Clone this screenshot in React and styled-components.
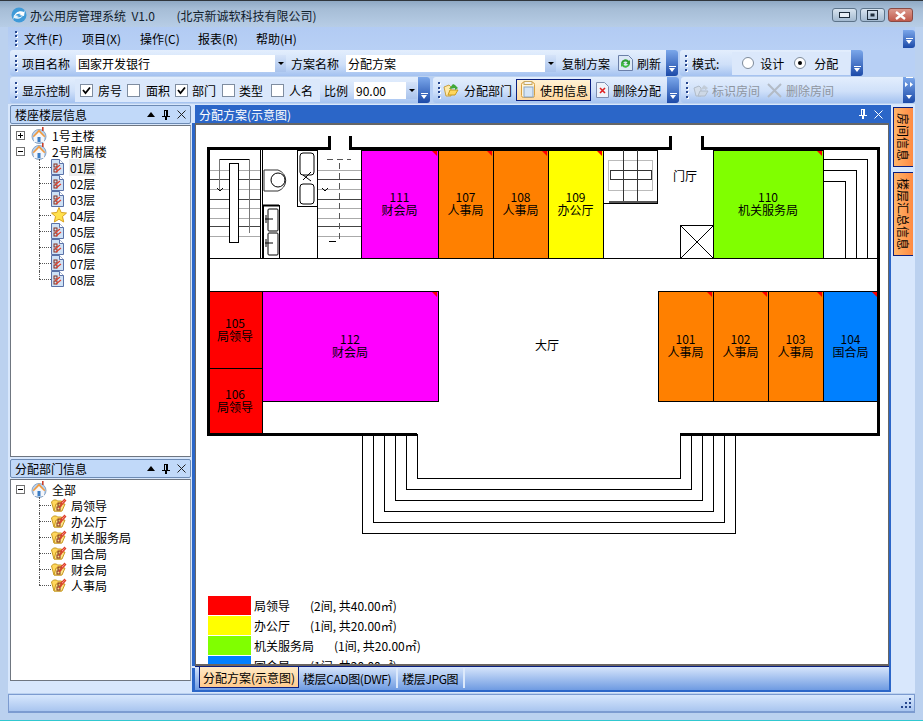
import React from 'react';
import styled, { createGlobalStyle } from 'styled-components';

const GlobalStyle = createGlobalStyle`
  html, body { margin: 0; padding: 0; background: #000; }
  body { font-family: "Noto Sans CJK SC", "Liberation Sans", sans-serif; font-size: 12px; color: #000; }
`;

const Window = styled.div`
  width: 923px;
  height: 721px;
  box-sizing: border-box;
  overflow: hidden;
  display: flex;
  flex-direction: column;
  background: #bbd1ef;
  border-top: 1px solid #30363c;
  border-bottom: 1px solid #30c8d0;
`;

const TitleBar = styled.div`
  height: 26px;
  flex: none;
  display: flex;
  align-items: center;
  padding: 2px 10px 0 11px;
  box-sizing: border-box;
  background: linear-gradient(#8fa9c4, #a6bdd6 30%, #b7cde6);
`;

const TitleText = styled.span`
  margin-left: 3px;
  white-space: pre;
  font-size: 12px;
  color: #10202c;
`;

const WinButtons = styled.div`
  margin-left: auto;
  display: flex;
  gap: 3px;
`;

const WinButton = styled.div`
  width: 25px;
  height: 14px;
  box-sizing: border-box;
  border: 1px solid ${p => (p.$close ? '#8a4a44' : '#5c7389')};
  border-radius: 3px;
  display: flex;
  align-items: center;
  justify-content: center;
  background: ${p => (p.$close ? 'linear-gradient(#dc9a8e, #c05a4c)' : 'linear-gradient(#d8e4ef, #a3bad0)')};
`;

const Frame = styled.div`
  flex: 1;
  min-height: 0;
  display: flex;
  flex-direction: column;
  padding: 0 8px 7px;
`;

const MenuBar = styled.div`
  height: 23px;
  flex: none;
  display: flex;
  align-items: center;
  padding-left: 5px;
  background: linear-gradient(#b2cbf3, #b8d0f5);
`;

const MenuItem = styled.span`
  width: 58px;
  white-space: nowrap;
`;

const Menus = styled.div`
  display: flex;
  margin-left: 6px;
`;

const ToolRow = styled.div`
  height: 26px;
  flex: none;
  display: flex;
  margin-bottom: 1px;
  padding-left: 2px;
  background: #b8d0f5;
`;

const Toolbar = styled.div`
  width: ${p => p.$w}px;
  margin-left: ${p => p.$ml || 0}px;
  flex: none;
  box-sizing: border-box;
  display: flex;
  align-items: center;
  padding-left: 3px;
  border-radius: 3px;
  background: linear-gradient(#e3eefd, #cfe0f9 55%, #a4c2f0);
`;

const GripBox = styled.div`
  width: 5px;
  height: 16px;
  flex: none;
  display: flex;
  flex-direction: column;
  justify-content: space-between;
  align-items: center;
`;

const GripDot = styled.i`
  width: 2px;
  height: 2px;
  background: #27478f;
  box-shadow: 1px 1px 0 #fff;
`;

const Label = styled.span`
  margin-left: ${p => p.$ml || 0}px;
  white-space: nowrap;
  flex: none;
  color: ${p => (p.$off ? '#8e959f' : '#000')};
`;

const Combo = styled.div`
  width: ${p => p.$w}px;
  height: 17px;
  margin-left: ${p => p.$ml || 0}px;
  flex: none;
  display: flex;
  align-items: center;
  background: #fff;
  padding-left: 2px;
  box-sizing: border-box;
`;

const ComboArrow = styled.div`
  margin-left: auto;
  width: 11px;
  height: 17px;
  display: flex;
  align-items: center;
  justify-content: center;
  background: linear-gradient(#d5e3f9, #a9c3ec);
  &::after {
    content: '';
    border: 3px solid transparent;
    border-top: 3px solid #000;
    border-bottom: 0;
  }
`;

const ChevronBox = styled.div`
  margin-left: auto;
  width: 12px;
  height: ${p => p.$h || 26}px;
  flex: none;
  display: flex;
  flex-direction: column;
  align-items: center;
  justify-content: flex-end;
  padding-bottom: 4px;
  box-sizing: border-box;
  border-radius: 0 3px 3px 0;
  background: linear-gradient(#7ba7ea, #1c4aa8);
  &::before {
    content: '';
    width: 7px;
    height: 1px;
    background: #fff;
    margin-bottom: 1px;
  }
  &::after {
    content: '';
    border: 3.5px solid transparent;
    border-top: 4px solid #fff;
    border-bottom: 0;
  }
`;

const MoreMark = styled.svg`
  margin-top: 3px;
  margin-bottom: auto;
`;

const Lighter = styled.div`
  height: ${p => p.$h}px;
  width: ${p => p.$w}px;
  margin-left: ${p => p.$ml || 0}px;
  flex: none;
  display: flex;
  align-items: center;
  background: #dbe8fb;
`;

const CheckBoxBox = styled.div`
  width: 13px;
  height: 13px;
  flex: none;
  margin-left: ${p => p.$ml || 0}px;
  box-sizing: border-box;
  border: 1px solid #7f8da0;
  background: #fff;
  display: flex;
  align-items: center;
  justify-content: center;
`;

const Radio = styled.div`
  width: 12px;
  height: 12px;
  flex: none;
  margin-left: ${p => p.$ml || 0}px;
  box-sizing: border-box;
  border-radius: 50%;
  border: 1px solid #7d8a9a;
  background: #fff;
  display: flex;
  align-items: center;
  justify-content: center;
  &::after {
    content: '';
    display: ${p => (p.$on ? 'block' : 'none')};
    width: 4px;
    height: 4px;
    border-radius: 50%;
    background: #000;
  }
`;

const ActiveButton = styled.div`
  width: 75px;
  height: 22px;
  margin-left: 4px;
  flex: none;
  box-sizing: border-box;
  display: flex;
  align-items: center;
  padding-left: 3px;
  border: 1px solid #0a1f80;
  background: linear-gradient(#fff2d4, #ffd9a0);
`;

const IconSlot = styled.div`
  margin-left: ${p => p.$ml || 0}px;
  flex: none;
  display: flex;
`;

const Middle = styled.div`
  flex: 1;
  min-height: 0;
  display: flex;
  padding-left: 2px;
  background: #d8e7fc;
`;

const LeftColumn = styled.div`
  width: 181px;
  flex: none;
  display: flex;
  flex-direction: column;
  padding-top: 1px;
  padding-bottom: 12px;
  box-sizing: border-box;
`;

const PanelHeader = styled.div`
  height: 19px;
  flex: none;
  box-sizing: border-box;
  display: flex;
  align-items: center;
  padding: 0 4px 0 4px;
  border: 1px solid #6d8bb4;
  border-radius: 2px;
  background: #c1d9f9;
`;

const PanelTools = styled.div`
  margin-left: auto;
  display: flex;
  align-items: center;
  gap: 7px;
`;

const TreeBox = styled.div`
  height: ${p => p.$h}px;
  flex: ${p => (p.$h ? 'none' : 1)};
  margin-top: 1px;
  margin-bottom: ${p => p.$mb || 0}px;
  box-sizing: border-box;
  border: 1px solid #6f7680;
  border-right-color: #9aa3ad;
  background: #fff;
  padding-top: ${p => p.$pt || 0}px;
`;

const TreeRow = styled.div`
  position: relative;
  height: 16px;
  display: flex;
  align-items: center;
  padding-left: ${p => (p.$child ? 40 : 5)}px;
  white-space: nowrap;
  ${p => p.$child && `
    &::before {
      content: '';
      position: absolute;
      left: 28px;
      top: 50%;
      width: 12px;
      border-top: 1px dotted #555;
    }
    &::after {
      content: '';
      position: absolute;
      left: 28px;
      top: 0;
      height: ${p.$last ? '50%' : '100%'};
      border-left: 1px dotted #555;
    }
  `}
`;

const Expander = styled.div`
  width: 9px;
  height: 9px;
  flex: none;
  box-sizing: border-box;
  border: 1px solid #707070;
  background: #fff;
  position: relative;
  margin-right: 6px;
  &::before {
    content: '';
    position: absolute;
    left: 1px;
    right: 1px;
    top: 3px;
    height: 1px;
    background: #000;
  }
  &::after {
    content: '';
    display: ${p => (p.$open ? 'none' : 'block')};
    position: absolute;
    top: 1px;
    bottom: 1px;
    left: 3px;
    width: 1px;
    background: #000;
  }
`;

const NodeText = styled.span`
  margin-left: ${p => p.$ml || 5}px;
  padding: 0 1px;
  background: ${p => (p.$selected ? '#eeeeee' : 'transparent')};
`;

const Main = styled.div`
  width: 696px;
  margin-left: 4px;
  margin-top: 1px;
  margin-bottom: 1px;
  flex: none;
  box-sizing: border-box;
  display: flex;
  flex-direction: column;
  border: solid #2b66c8;
  border-width: 0 2px 2px 0;
`;

const MainHeader = styled.div`
  height: 18px;
  flex: none;
  display: flex;
  align-items: center;
  padding: 0 6px 0 4px;
  background: #2b66c8;
  color: #fff;
`;

const Content = styled.div`
  flex: 1;
  min-height: 0;
  overflow: hidden;
  background: #fff;
  border-top: 2px solid #666;
  border-left: 1px solid #666;
  border-right: 1px solid #666;
  border-bottom: 2px solid #6a6460;
  box-shadow: -3px 0 0 #2b66c8;
`;

const PlanSvg = styled.svg`
  display: block;
  font-family: "Noto Sans CJK SC", "Liberation Sans", sans-serif;
  font-size: 12px;
`;

const Legend = styled.div`
  padding: 1px 0 0 12px;
  display: flex;
  flex-direction: column;
  gap: 1px;
`;

const LegendRow = styled.div`
  height: 19px;
  display: flex;
  align-items: center;
`;

const Swatch = styled.div`
  width: 43px;
  height: 19px;
  margin-right: 3px;
  background: ${p => p.$color};
`;

const LegendInfo = styled.span`
  margin-left: 20px;
  font-size: 12px;
`;

const TabBar = styled.div`
  height: 23px;
  flex: none;
  display: flex;
  align-items: flex-start;
  padding-left: 4px;
  border-top: 1px solid #0a1f80;
  background: linear-gradient(#d6e5fb, #6f9be2);
  box-shadow: -3px 2px 0 #2b66c8;
`;

const ActiveTab = styled.div`
  width: 100px;
  height: 21px;
  box-sizing: border-box;
  display: flex;
  align-items: center;
  justify-content: center;
  white-space: nowrap;
  border: 1px solid #0a1f80;
  border-top: 0;
  background: linear-gradient(#ffe9c4, #ffcb8e);
`;

const Tab = styled.div`
  height: 20px;
  margin-top: 1px;
  box-sizing: border-box;
  padding: 0 5px 0 4px;
  display: flex;
  align-items: center;
  white-space: nowrap;
  letter-spacing: -0.4px;
  border-right: 2px solid #dce9fb;
`;

const SideTabs = styled.div`
  width: 20px;
  margin-left: 2px;
  padding-top: 3px;
  flex: none;
  display: flex;
  flex-direction: column;
  gap: 5px;
`;

const SideTab = styled.div`
  height: ${p => p.$h}px;
  box-sizing: border-box;
  writing-mode: vertical-rl;
  text-orientation: sideways;
  display: flex;
  align-items: center;
  justify-content: center;
  border: 1px solid #0a1f80;
  border-right: 0;
  background: linear-gradient(90deg, #ffb56a, #ff8a42);
`;

const StatusBar = styled.div`
  height: 19px;
  margin-top: 1px;
  flex: none;
  box-sizing: border-box;
  display: flex;
  justify-content: flex-end;
  align-items: flex-end;
  padding: 0 2px 2px 0;
  border: 1px solid #7c9bd0;
  border-bottom-width: 2px;
  background: linear-gradient(#d7e7fd, #a9c5ef);
`;

function Grip() {
  return (
    <GripBox>
      <GripDot /><GripDot /><GripDot /><GripDot />
    </GripBox>
  );
}

function Check({ on, ml }) {
  return (
    <CheckBoxBox $ml={ml}>
      {on && (
        <svg width="9" height="9" viewBox="0 0 9 9">
          <path d="M1 4l2.5 3L8 1.5" fill="none" stroke="#000" strokeWidth="1.8" />
        </svg>
      )}
    </CheckBoxBox>
  );
}

function Logo() {
  return (
    <svg width="16" height="16" viewBox="0 0 16 16">
      <circle cx="8" cy="8" r="7.5" fill="#3f9ad8" />
      <path d="M3 10c1-5 6-7 10-5l1-2-1 6-5-1 2-1c-3-1-5 0-7 3z" fill="#fff" />
      <path d="M13 6c-1 5-6 7-10 5l-1 2 1-5 5 1-2 1c3 1 5 0 7-4z" fill="#e8f4fc" />
    </svg>
  );
}

function HouseIcon() {
  return (
    <svg width="16" height="17" viewBox="0 0 16 17">
      <circle cx="8" cy="9.5" r="7" fill="#b9d2ee" stroke="#8aa5c4" />
      <path d="M3 9l5-5 5 5v6H3z" fill="#f4f6fa" />
      <path d="M1.5 9.5L8 2.5l6.5 7-1.500.5L8 5 3 10z" fill="#f29a3e" />
      <rect x="11" y="0" width="1.6" height="4" fill="#c8402c" />
      <rect x="6.5" y="10" width="3" height="5" fill="#3a7cc4" />
    </svg>
  );
}

function DocIcon() {
  return (
    <svg width="13" height="16" viewBox="0 0 13 16">
      <path d="M.5.5h8l4 4v11H.5z" fill="#cfe2f6" stroke="#5b72a8" />
      <path d="M8.500.5v4h4" fill="#fff" stroke="#5b72a8" />
      <rect x="3" y="5" width="3" height="3" fill="none" stroke="#803020" />
      <rect x="3" y="10" width="3" height="3" fill="none" stroke="#803020" />
      <path d="M4 10l5-4M5 13l5-4" stroke="#e0402c" strokeWidth="1.2" />
    </svg>
  );
}

function StarIcon() {
  return (
    <svg width="16" height="16" viewBox="0 0 16 16">
      <path d="M8 .5l2.2 5 5.3.5-4 3.5 1.2 5.5L8 12.2 3.3 15l1.2-5.500-4-3.500 5.300-.5z" fill="#ffe14d" stroke="#d8a020" />
    </svg>
  );
}

function FolderIcon() {
  return (
    <svg width="16" height="16" viewBox="0 0 16 16">
      <path d="M.5 5l2-2h3l1 1h4v10H3z" fill="#ffd75e" stroke="#c89a20" />
      <path d="M3 14l2-7h9l-3 7z" fill="#ffe48a" stroke="#c89a20" />
      <rect x="7" y="6" width="3" height="3" fill="none" stroke="#803020" />
      <rect x="6" y="10" width="3" height="3" fill="none" stroke="#803020" />
      <path d="M8 11l7-8M9 7l5-5" stroke="#e0402c" strokeWidth="1.2" />
    </svg>
  );
}

function PanelButtons() {
  return (
    <PanelTools>
      <svg width="8" height="5" viewBox="0 0 8 5"><path d="M4 0l4 5H0z" /></svg>
      <svg width="8" height="10" viewBox="0 0 8 10"><path d="M2 0h4v6h2v1H5v3H3V7H0V6h2zM3 1v5h1V1z" /></svg>
      <svg width="9" height="9" viewBox="0 0 9 9"><path d="M.5.5l8 8M8.500.5l-8 8" stroke="#222" fill="none" /></svg>
    </PanelTools>
  );
}

const floors = ['01层', '02层', '03层', '04层', '05层', '06层', '07层', '08层'];
const departments = ['局领导', '办公厅', '机关服务局', '国合局', '财会局', '人事局'];

const RED = '#ff0000';
const ORANGE = '#ff8000';
const YELLOW = '#ffff00';
const GREEN = '#80ff00';
const BLUE = '#0080ff';
const MAGENTA = '#ff00ff';

const rooms = [
  { id: '111', name: '财会局', x: 361, y: 150, w: 77, h: 108, fill: MAGENTA },
  { id: '107', name: '人事局', x: 438, y: 150, w: 55, h: 108, fill: ORANGE },
  { id: '108', name: '人事局', x: 493, y: 150, w: 55, h: 108, fill: ORANGE },
  { id: '109', name: '办公厅', x: 548, y: 150, w: 55, h: 108, fill: YELLOW },
  { id: '110', name: '机关服务局', x: 713, y: 150, w: 110, h: 108, fill: GREEN },
  { id: '105', name: '局领导', x: 208, y: 291, w: 54, h: 77, fill: RED, flat: true },
  { id: '106', name: '局领导', x: 208, y: 368, w: 54, h: 65, fill: RED, flat: true },
  { id: '112', name: '财会局', x: 262, y: 291, w: 176, h: 110, fill: MAGENTA },
  { id: '101', name: '人事局', x: 658, y: 291, w: 55, h: 110, fill: ORANGE },
  { id: '102', name: '人事局', x: 713, y: 291, w: 55, h: 110, fill: ORANGE },
  { id: '103', name: '人事局', x: 768, y: 291, w: 55, h: 110, fill: ORANGE },
  { id: '104', name: '国合局', x: 823, y: 291, w: 55, h: 110, fill: BLUE },
];

const legend = [
  { color: RED, name: '局领导', info: '(2间, 共40.00㎡)' },
  { color: YELLOW, name: '办公厅', info: '(1间, 共20.00㎡)' },
  { color: GREEN, name: '机关服务局', info: '(1间, 共20.00㎡)' },
  { color: BLUE, name: '国合局', info: '(1间, 共20.00㎡)' },
];

const stairSteps = [
  [170, '#aaa'], [179, '#444'], [189, '#aaa'], [199, '#444'], [208, '#aaa'],
  [218, '#aaa'], [226, '#444'], [236, '#aaa'],
];

function Room({ room }) {
  const { x, y, w, h, fill, id, name, flat } = room;
  const cx = x + w / 2;
  const cy = y + h / 2;
  return (
    <g>
      <rect x={x + 0.5} y={y + 0.5} width={w} height={h} fill={fill} stroke="#000" />
      {!flat && <path d={`M${x + w - 6} ${y + 1}h5v5z`} fill="#ff0000" />}
      <text x={cx} y={cy - 2} textAnchor="middle">{id}</text>
      <text x={cx} y={cy + 11} textAnchor="middle">{name}</text>
    </g>
  );
}

function FloorPlan() {
  return (
    <PlanSvg width="690" height="470" viewBox="196 125 690 470">
      {/* 下方台阶 */}
      {[0, 1, 2, 3, 4, 5].map(i => (
        <path
          key={i}
          d={`M${417.5 - i * 11} 434V${478.5 + i * 11}H${680.5 + i * 11}V434`}
          fill="none"
          stroke="#000"
          shapeRendering="crispEdges"
        />
      ))}

      {/* 左侧楼梯 */}
      <g shapeRendering="crispEdges" fill="none" stroke="#000">
        {stairSteps.map(([y, c]) => (
          <path key={y} d={`M210 ${y}.5H260M318 ${y}.5H361`} stroke={c} />
        ))}
        <path d="M260.5 150V258M262.5 150V258M317.5 150V258M361 150V258" />
        <path d="M219.5 190V159.5H249.5V233" stroke="#777" />
        <path d="M220 159.5H249" />
        <rect x="229.5" y="163.5" width="9" height="79" fill="#fff" />
        <path d="M327 159.5H351M339.5 163V240" strokeDasharray="6 4" stroke="#555" />
        <path d="M329 241.5h7" />
      </g>
      <path d="M217 188l3 3 3-3M322 188l3 3 3-3" fill="none" stroke="#000" />

      {/* 卫生间 */}
      <g fill="none" stroke="#000">
        <path d="M264 170h14a11 11 0 0 1 0 21h-14z" fill="#fff" stroke="#333" />
        <circle cx="278" cy="180" r="7" />
        <rect x="263.5" y="205.5" width="16" height="53" fill="#fff" />
        <path d="M263 205.5h16" strokeWidth="2" />
        <rect x="268" y="209" width="10" height="22" rx="1" />
        <rect x="268" y="233" width="10" height="22" rx="1" />
        <path d="M265 219h8M265 243h8M266 215v8M266 239v8" />
        <rect x="297.5" y="150.5" width="20" height="56" fill="#fff" />
        <rect x="300" y="153" width="14" height="22" rx="3" />
        <rect x="300" y="184" width="14" height="20" rx="3" />
        <path d="M303 175l8 6M311 172l-8 8" />
      </g>

      {/* 房间 */}
      {rooms.map(room => <Room key={room.id} room={room} />)}

      {/* 中部楼梯和电梯 */}
      <g fill="none" stroke="#000" shapeRendering="crispEdges">
        <rect x="603.5" y="150.5" width="54" height="53" fill="#fff" />
        <rect x="608.5" y="160.5" width="44" height="30" stroke="#bbb" />
        <rect x="610.5" y="170.5" width="41" height="9" stroke="#333" />
        <path d="M623.5 150V203M637.5 150V203" stroke="#333" />
        <path d="M609 201.5H657" strokeWidth="2" stroke="#555" />
      </g>
      <g fill="none" stroke="#000">
        <rect x="680.5" y="225.5" width="33" height="33" fill="#fff" shapeRendering="crispEdges" />
        <path d="M681 226l32 32M713 226l-32 32" />
      </g>
      <text x="685" y="181" textAnchor="middle">门厅</text>
      <text x="547" y="350" textAnchor="middle">大厅</text>

      {/* 右上楼梯 */}
      <g fill="none" stroke="#000" shapeRendering="crispEdges">
        <path d="M823 159.5H867.5V258M823 170.5H856.500V258M823 181.5H845.500V258" />
        <path d="M208 258.5H878" />
      </g>

      {/* 外墙 */}
      <g fill="none" stroke="#000" strokeWidth="3" shapeRendering="crispEdges">
        <path d="M329 136V148.5H208.5V434.5H417" />
        <path d="M350 136V148.5H670V136" />
        <path d="M702 136V148.5H878.5V434.5H680" />
      </g>
    </PlanSvg>
  );
}

export default function App() {
  return (
    <>
      <GlobalStyle />
      <Window>
        <TitleBar>
          <Logo />
          <TitleText>办公用房管理系统  V1.0        (北京新诚软科技有限公司)</TitleText>
          <WinButtons>
            <WinButton>
              <svg width="11" height="6" viewBox="0 0 11 6"><rect x=".5" y=".5" width="10" height="5" fill="#e8eef5" stroke="#1d2c3a" /></svg>
            </WinButton>
            <WinButton>
              <svg width="11" height="10" viewBox="0 0 11 10"><rect x=".5" y=".5" width="10" height="9" fill="none" stroke="#1d2c3a" /><rect x="3.5" y="3.5" width="4" height="3" fill="#1d2c3a" /></svg>
            </WinButton>
            <WinButton $close>
              <svg width="13" height="9" viewBox="0 0 13 9"><path d="M2 1l9 7M11 1L2 8" stroke="#fff" strokeWidth="2.4" /></svg>
            </WinButton>
          </WinButtons>
        </TitleBar>

        <Frame>
          <MenuBar>
            <Grip />
            <Menus>
              {['文件(F)', '项目(X)', '操作(C)', '报表(R)', '帮助(H)'].map(m => (
                <MenuItem key={m}>{m}</MenuItem>
              ))}
            </Menus>
            <ChevronBox $h={18} />
          </MenuBar>

          <ToolRow>
            <Toolbar $w={668}>
              <Grip />
              <Label $ml={4}>项目名称</Label>
              <Combo $w={210} $ml={6}>国家开发银行<ComboArrow /></Combo>
              <Label $ml={5}>方案名称</Label>
              <Combo $w={210} $ml={7}>分配方案<ComboArrow /></Combo>
              <Label $ml={6}>复制方案</Label>
              <IconSlot $ml={8}>
                <svg width="15" height="16" viewBox="0 0 15 16">
                  <path d="M.5.5h10l4 4v11H.5z" fill="#dbe8f6" stroke="#6b7fa8" />
                  <path d="M3 8a4.500 4.500 0 0 1 8-2l1-1v4H8l1.500-1.500A2.500 2.500 0 0 0 5 8.500z" fill="#2f9e34" />
                  <path d="M12 9a4.500 4.500 0 0 1-8 2l-1 1V8h4l-1.500 1.500A2.500 2.500 0 0 0 10 9z" fill="#3fb944" />
                </svg>
              </IconSlot>
              <Label $ml={4}>刷新</Label>
              <ChevronBox />
            </Toolbar>
            <Toolbar $w={183} $ml={2}>
              <Grip />
              <Label $ml={4}>模式:</Label>
              <Lighter $w={118} $h={23} $ml={13}>
                <Radio $ml={10} />
                <Label $ml={6}>设计</Label>
                <Radio $ml={10} $on />
                <Label $ml={8}>分配</Label>
              </Lighter>
              <ChevronBox />
            </Toolbar>
          </ToolRow>

          <ToolRow>
            <Toolbar $w={420}>
              <Grip />
              <Label $ml={4}>显示控制</Label>
              <Lighter $w={245} $h={23} $ml={5}>
                <Check on ml={5} />
                <Label $ml={5}>房号</Label>
                <Check ml={5} />
                <Label $ml={6}>面积</Label>
                <Check on ml={5} />
                <Label $ml={4}>部门</Label>
                <Check ml={6} />
                <Label $ml={4}>类型</Label>
                <Check ml={8} />
                <Label $ml={5}>人名</Label>
              </Lighter>
              <Label $ml={4}>比例</Label>
              <Combo $w={63} $ml={6}>90.00<ComboArrow /></Combo>
              <ChevronBox />
            </Toolbar>
            <Toolbar $w={246} $ml={3}>
              <Grip />
              <IconSlot $ml={2}>
                <svg width="16" height="16" viewBox="0 0 16 16">
                  <path d="M1 5l5-2 2 2v9H3z" fill="#ffe9a8" stroke="#c8a040" />
                  <path d="M5 13l2-5h8l-3 5z" fill="#ffd75e" stroke="#c89a20" />
                  <path d="M6 7l4-5 2 1 3 3-3 2V6z" fill="#40a838" />
                </svg>
              </IconSlot>
              <Label $ml={5}>分配部门</Label>
              <ActiveButton>
                <svg width="16" height="18" viewBox="0 0 16 18">
                  <rect x="1.500" y="1.500" width="13" height="15" rx="2" fill="#fff4d8" stroke="#d8a040" />
                  <rect x="4" y="0.500" width="8" height="3" fill="#f4f4f4" stroke="#c8a860" />
                  <rect x="4" y="6" width="9" height="10" fill="#d4e4f6" stroke="#8aa5c4" />
                </svg>
                <Label $ml={4}>使用信息</Label>
              </ActiveButton>
              <IconSlot $ml={5}>
                <svg width="13" height="16" viewBox="0 0 13 16">
                  <path d="M.5.5h8l4 4v11H.5z" fill="#eef3fa" stroke="#7f8fb0" />
                  <path d="M4 6l5 5M9 6l-5 5" stroke="#e02020" strokeWidth="1.6" />
                </svg>
              </IconSlot>
              <Label $ml={4}>删除分配</Label>
              <ChevronBox />
            </Toolbar>
            <Toolbar $w={234} $ml={2}>
              <Grip />
              <IconSlot $ml={4}>
                <svg width="16" height="15" viewBox="0 0 16 15">
                  <path d="M1 5l5-2 2 2v8H3z" fill="#d4deeb" stroke="#b0bbc8" />
                  <path d="M5 13l2-5h8l-3 5z" fill="#cdd8e6" stroke="#b0bbc8" />
                  <path d="M7 7l4-5 4 3-3 3V6z" fill="#c2ccd8" />
                </svg>
              </IconSlot>
              <Label $ml={3} $off>标识房间</Label>
              <IconSlot $ml={7}>
                <svg width="15" height="15" viewBox="0 0 15 15"><path d="M1 1l13 13M14 1L1 14" stroke="#b3bbc6" strokeWidth="2" /></svg>
              </IconSlot>
              <Label $ml={4} $off>删除房间</Label>
              <ChevronBox>
                <MoreMark width="8" height="5" viewBox="0 0 8 5">
                  <path d="M0 0l3 2.500L0 5zM5 0l3 2.500L5 5z" fill="#fff" />
                </MoreMark>
              </ChevronBox>
            </Toolbar>
          </ToolRow>

          <Middle>
            <LeftColumn>
              <PanelHeader>楼座楼层信息<PanelButtons /></PanelHeader>
              <TreeBox $h={332} $mb={2} $pt={1}>
                <TreeRow>
                  <Expander /><HouseIcon /><NodeText $ml={4}>1号主楼</NodeText>
                </TreeRow>
                <TreeRow>
                  <Expander $open /><HouseIcon /><NodeText $ml={4}>2号附属楼</NodeText>
                </TreeRow>
                {floors.map((f, i) => (
                  <TreeRow key={f} $child $last={i === floors.length - 1}>
                    {f === '04层' ? <StarIcon /> : <DocIcon />}
                    <NodeText $ml={f === '04层' ? 2 : 5} $selected={i === 0}>{f}</NodeText>
                  </TreeRow>
                ))}
              </TreeBox>
              <PanelHeader>分配部门信息<PanelButtons /></PanelHeader>
              <TreeBox $pt={1}>
                <TreeRow>
                  <Expander $open /><HouseIcon /><NodeText $ml={4}>全部</NodeText>
                </TreeRow>
                {departments.map((d, i) => (
                  <TreeRow key={d} $child $last={i === departments.length - 1}>
                    <FolderIcon /><NodeText $ml={3}>{d}</NodeText>
                  </TreeRow>
                ))}
              </TreeBox>
            </LeftColumn>

            <Main>
              <MainHeader>
                分配方案(示意图)
                <PanelTools>
                  <svg width="8" height="10" viewBox="0 0 8 10"><path d="M2 0h4v6h2v1H5v3H3V7H0V6h2zM3 1v5h1V1z" fill="#fff" /></svg>
                  <svg width="9" height="9" viewBox="0 0 9 9"><path d="M.5.5l8 8M8.500.5l-8 8" stroke="#fff" fill="none" /></svg>
                </PanelTools>
              </MainHeader>
              <Content>
                <FloorPlan />
                <Legend>
                  {legend.map(l => (
                    <LegendRow key={l.name}>
                      <Swatch $color={l.color} />
                      {l.name}
                      <LegendInfo>{l.info}</LegendInfo>
                    </LegendRow>
                  ))}
                </Legend>
              </Content>
              <TabBar>
                <ActiveTab>分配方案(示意图)</ActiveTab>
                <Tab>楼层CAD图(DWF)</Tab>
                <Tab>楼层JPG图</Tab>
              </TabBar>
            </Main>

            <SideTabs>
              <SideTab $h={60}>房间信息</SideTab>
              <SideTab $h={84}>楼层汇总信息</SideTab>
            </SideTabs>
          </Middle>

          <StatusBar>
            <svg width="11" height="11" viewBox="0 0 11 11" fill="#27478f">
              <rect x="8" y="0" width="2" height="2" />
              <rect x="4" y="4" width="2" height="2" /><rect x="8" y="4" width="2" height="2" />
              <rect x="0" y="8" width="2" height="2" /><rect x="4" y="8" width="2" height="2" /><rect x="8" y="8" width="2" height="2" />
            </svg>
          </StatusBar>
        </Frame>
      </Window>
    </>
  );
}
